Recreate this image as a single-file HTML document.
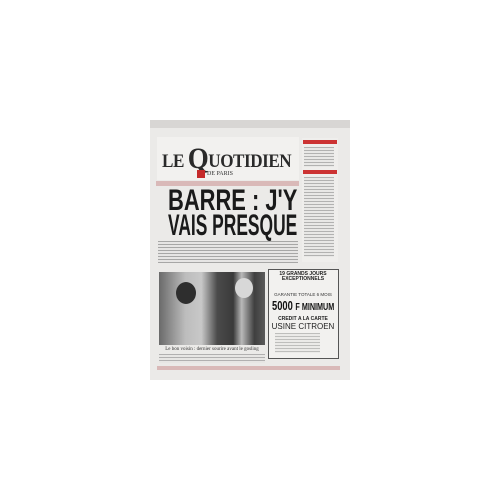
<!DOCTYPE html>
<html><head><style>
body{margin:0;width:500px;height:500px;background:#fff;position:relative;overflow:hidden;font-family:"Liberation Sans",sans-serif}
.a{position:absolute;white-space:nowrap}
.t{background:repeating-linear-gradient(#8a8a8a 0 1px,#e4e3e2 1px 3px)}
</style></head><body>
<div class="a" style="left:150px;top:120px;width:200px;height:260px;background:#ebeae8"></div>
<div class="a" style="left:150px;top:120px;width:200px;height:8px;background:#d8d6d4"></div>
<!-- header -->
<div class="a" style="left:157px;top:137px;width:142px;height:43px;background:#f2f1ef"></div>
<div class="a" style="left:162px;top:148px;font-family:'Liberation Serif',serif;font-size:19px;font-weight:bold;letter-spacing:-0.5px;color:#2a2a2a;line-height:22px;transform:scaleX(0.9);transform-origin:left top">LE <span style="font-size:30px;vertical-align:-1px">Q</span>UOTIDIEN</div>
<div class="a" style="left:197px;top:170px;width:8px;height:8px;background:#c52a2a"></div>
<div class="a" style="left:207px;top:171px;font-family:'Liberation Serif',serif;font-size:6px;color:#333">DE PARIS</div>
<div class="a" style="left:156px;top:181px;width:143px;height:5px;background:#d9b9b8"></div>
<!-- headline -->
<div class="a" style="left:168px;top:187px;font-weight:bold;font-size:30px;line-height:28px;color:#1a1a1a;transform:scaleX(0.73);transform-origin:left top">BARRE : J'Y</div>
<div class="a" style="left:168px;top:212px;font-weight:bold;font-size:30px;line-height:28px;color:#1a1a1a;transform:scaleX(0.58);transform-origin:left top">VAIS PRESQUE</div>
<div class="a t" style="left:158px;top:241px;width:140px;height:22px;opacity:.7"></div>
<!-- right column -->
<div class="a" style="left:302px;top:138px;width:36px;height:124px;background:#efeeec"></div>
<div class="a" style="left:303px;top:140px;width:34px;height:4px;background:#c33"></div>
<div class="a" style="left:303px;top:170px;width:34px;height:4px;background:#c33"></div>
<div class="a t" style="left:304px;top:147px;width:30px;height:20px;opacity:.6"></div>
<div class="a t" style="left:304px;top:177px;width:30px;height:80px;opacity:.6"></div>
<!-- photo -->
<div class="a" style="left:159px;top:272px;width:106px;height:73px;background:linear-gradient(90deg,#6a6a6a 0,#bdbdbd 25%,#c8c8c8 40%,#4a4a4a 55%,#3a3a3a 70%,#b9b9b9 78%,#3f3f3f 90%,#5a5a5a)"></div>
<div class="a" style="left:235px;top:278px;width:18px;height:20px;border-radius:50%;background:#d8d8d8"></div>
<div class="a" style="left:176px;top:282px;width:20px;height:22px;border-radius:50%;background:#2e2e2e"></div>
<div class="a" style="left:159px;top:347px;width:106px;font-family:'Liberation Serif',serif;font-size:5px;color:#333;text-align:center">Le bon voisin : dernier sourire avant le gosling</div>
<div class="a t" style="left:159px;top:354px;width:106px;height:9px;opacity:.6"></div>
<!-- ad -->
<div class="a" style="left:268px;top:269px;width:69px;height:88px;background:#f2f1ef;border:1px solid #555"></div>
<div class="a" style="left:268px;top:272px;width:70px;font-size:5px;font-weight:bold;text-align:center;color:#222;line-height:5px">19 GRANDS JOURS<br>EXCEPTIONNELS</div>
<div class="a" style="left:268px;top:292px;width:70px;font-size:4.5px;text-align:center;color:#333">GARANTIE TOTALE 6 MOIS</div>
<div class="a" style="left:272px;top:298px;font-size:13px;font-weight:bold;color:#111;transform:scaleX(.72);transform-origin:left top">5000 <span style="font-size:10px">F MINIMUM</span></div>
<div class="a" style="left:268px;top:316px;width:70px;font-size:5px;font-weight:bold;text-align:center;color:#222">CREDIT A LA CARTE</div>
<div class="a" style="left:268px;top:322px;width:70px;font-size:8px;text-align:center;color:#222">USINE CITROEN</div>
<div class="a t" style="left:275px;top:333px;width:45px;height:20px;opacity:.5"></div>
<div class="a" style="left:157px;top:366px;width:183px;height:4px;background:#d9b9b8"></div>
</body></html>
